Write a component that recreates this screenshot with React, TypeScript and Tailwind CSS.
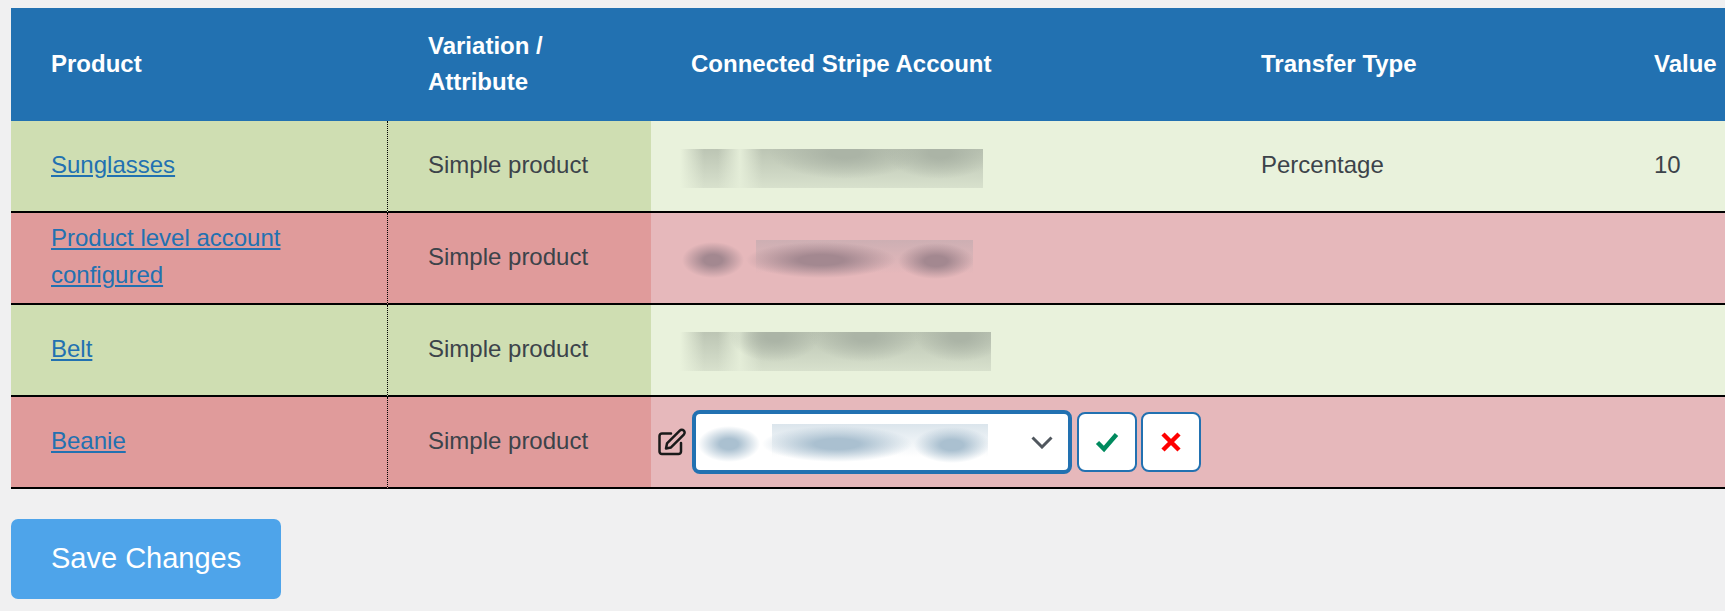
const rows = [
  { name: "Sunglasses", ok: true, type: "Percentage", value: "10" },
  { name: "Product level account configured", ok: false },
  { name: "Belt", ok: true },
  { name: "Beanie", ok: false, editing: true },
];

// redacted account ids in the screenshot: soft grey haze, hard cut at top, bottom and right
function HazeSmudge({ width, streaks }: { width: number; streaks: number[][] }) {
  return (
    <div className="relative h-[39px] overflow-hidden bg-gradient-to-b from-[#bcc5b4] to-[#d8e1cd]" style={{ width }}>
      <div className="absolute inset-y-0 left-0 w-[24px] bg-gradient-to-r from-[#e9f2dc] to-transparent" />
      <div className="absolute inset-y-0 left-[38px] w-[44px] bg-gradient-to-r from-transparent via-[#e4edd8] to-transparent" />
      {streaks.map(([x, w], i) => (
        <div
          key={i}
          className="absolute top-[-22px] h-[52px]"
          style={{ left: x, width: w, background: "radial-gradient(ellipse closest-side, #abb4a6 20%, transparent)" }}
        />
      ))}
    </div>
  );
}

function Blob({ left, top, width, color }: { left: number; top: number; width: number; color: string }) {
  return (
    <div
      className="absolute h-[36px]"
      style={{ left, top, width, background: `radial-gradient(ellipse closest-side, ${color} 30%, transparent)` }}
    />
  );
}

// same redaction, where the id text still shows as three dark blobs
function TextSmudge({ width, height, haze, blob }: { width: number; height: number; haze: string; blob: string }) {
  return (
    <div className="relative overflow-hidden" style={{ width, height }}>
      <div className="absolute top-0 right-0 bottom-0 left-[76px]" style={{ background: `linear-gradient(${haze}, transparent 80%)` }} />
      <Blob left={2} top={2} width={62} color={blob} />
      <Blob left={66} top={2} width={150} color={blob} />
      <Blob left={218} top={3} width={76} color={blob} />
    </div>
  );
}

function Account({ index }: { index: number }) {
  if (index === 0) {
    return (
      <div className="ml-[29px] mt-[5px]">
        <HazeSmudge width={303} streaks={[[90, 150], [205, 110]]} />
      </div>
    );
  }
  if (index === 1) {
    return (
      <div className="ml-[29px] mt-[5px]">
        <TextSmudge width={293} height={42} haze="#cdafb3" blob="#a38890" />
      </div>
    );
  }
  return (
    <div className="ml-[29px] mt-[3px]">
      <HazeSmudge width={311} streaks={[[50, 90], [130, 110], [235, 90]]} />
    </div>
  );
}

function EditRow() {
  return (
    <div className="flex items-center pl-[7px]">
      <svg width="28" height="28" viewBox="0 0 28 28" className="shrink-0" fill="none" stroke="#1a1a1a" strokeWidth="2.5" strokeLinecap="round" strokeLinejoin="round">
        <path d="M13 5.5 H4 a2.5 2.5 0 0 0 -2.5 2.5 V23.5 a2.5 2.5 0 0 0 2.5 2.5 H20.5 a2.5 2.5 0 0 0 2.5 -2.5 V15" />
        <path d="M21.8 2.6 a2.8 2.8 0 0 1 4 4 L13 19.4 L8 20.4 L9 15.4 Z" />
      </svg>
      <div className="ml-[6px] flex h-[64px] w-[380px] shrink-0 items-center justify-between rounded-[8px] border-4 border-[#2271b1] bg-white pr-[15px]">
        <div className="mt-[5px]">
          <TextSmudge width={292} height={41} haze="#dbe5ec" blob="#aac0d0" />
        </div>
        <svg width="22" height="13" viewBox="0 0 22 13" fill="none" stroke="#50575e" strokeWidth="3">
          <path d="M1.5 1.5 L11 11 L20.5 1.5" />
        </svg>
      </div>
      <button className="ml-[5px] flex h-[60px] w-[60px] items-center justify-center rounded-[8px] border-2 border-[#2271b1] bg-white">
        <svg width="24" height="22" viewBox="0 0 24 22">
          <path d="M2.5 11.5 L9 18 L21.5 3.5" fill="none" stroke="#008a5e" strokeWidth="4.5" />
        </svg>
      </button>
      <button className="ml-[4px] flex h-[60px] w-[60px] items-center justify-center rounded-[8px] border-2 border-[#2271b1] bg-white">
        <svg width="22" height="22" viewBox="0 0 22 22">
          <path d="M3 3 L19 19 M19 3 L3 19" fill="none" stroke="#ff0000" strokeWidth="4.5" />
        </svg>
      </button>
    </div>
  );
}

export default function App() {
  return (
    <div className="h-screen w-full overflow-hidden bg-[#f0f0f1] pl-[11px] pt-[8px] font-['Liberation_Sans',Arial,sans-serif] text-[24px] leading-[37px] text-[#3c434a]">
      <div className="w-[1714px] overflow-hidden">
        <table className="w-[1800px] table-fixed border-separate border-spacing-0 text-left">
          <colgroup>
            <col className="w-[377px]" />
            <col className="w-[263px]" />
            <col className="w-[570px]" />
            <col className="w-[393px]" />
            <col className="w-[197px]" />
          </colgroup>
          <thead>
            <tr className="h-[113px] bg-[#2271b1] align-middle text-white">
              <th className="px-[40px] pb-[2px] font-bold">Product</th>
              <th className="px-[40px] pb-[2px] font-bold leading-[36px]">Variation / Attribute</th>
              <th className="px-[40px] pb-[2px] font-bold">Connected Stripe Account</th>
              <th className="px-[40px] pb-[2px] font-bold">Transfer Type</th>
              <th className="px-[40px] pb-[2px] font-bold">Value</th>
            </tr>
          </thead>
          <tbody>
            {rows.map((row, i) => {
              const strong = row.ok ? "bg-[#cfdeb2]" : "bg-[#e09b9b]";
              const light = row.ok ? "bg-[#e9f2dc]" : "bg-[#e6b8bb]";
              return (
                <tr key={row.name} className="h-[92px] align-middle">
                  <td className={`${strong} border-b-2 border-r border-b-black border-r-black px-[40px] pb-[4px] [border-right-style:dotted]`}>
                    <a href="#" className="text-[#2271b1] underline">
                      {row.name}
                    </a>
                  </td>
                  <td className={`${strong} border-b-2 border-b-black px-[40px] pb-[4px]`}>Simple product</td>
                  <td className={`${light} border-b-2 border-b-black`}>
                    {row.editing ? <EditRow /> : <Account index={i} />}
                  </td>
                  <td className={`${light} border-b-2 border-b-black px-[40px] pb-[4px]`}>{row.type}</td>
                  <td className={`${light} border-b-2 border-b-black px-[40px] pb-[4px]`}>{row.value}</td>
                </tr>
              );
            })}
          </tbody>
        </table>
      </div>
      <button className="mt-[30px] block h-[80px] w-[270px] rounded-[7px] bg-[#4ea4ea] pb-[2px] pl-[40px] text-left text-[29px] text-white">
        Save Changes
      </button>
    </div>
  );
}
